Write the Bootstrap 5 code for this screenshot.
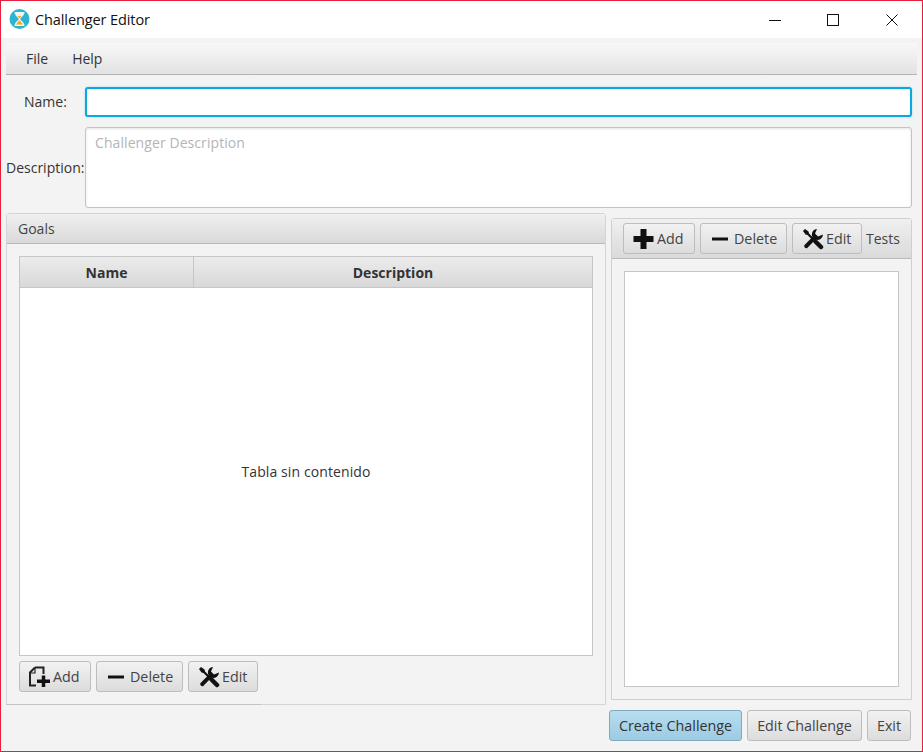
<!DOCTYPE html>
<html lang="en">
<head>
<meta charset="utf-8">
<title>Challenger Editor</title>
<link rel="stylesheet" href="https://cdn.jsdelivr.net/npm/bootstrap@5.3.0/dist/css/bootstrap.min.css">
<style>
html,body{height:100%;margin:0;}
body{font-family:"Open Sans","Noto Sans","Liberation Sans",sans-serif;font-size:14px;color:#333;background:#f3f3f3;}
.appwin{height:752px;border:1px solid #e81f3c;background:#f3f3f3;}
.titlebar{height:37px;background:#fff;color:#111;flex:none;}
.apptitle{font-size:14.5px;margin-left:5px;letter-spacing:-.1px;}
.logo{margin-left:8px;}
.winctl{width:59px;height:37px;}
.winfirst{width:57px;}
.winctls{margin-right:1px;}
.bodyarea{padding:5px 5px 10px;min-height:0;}
.menustrip{height:32px;background:linear-gradient(#f8f8f8,#e2e2e2);border-bottom:1px solid #b4b4b4;padding-left:8px;flex:none;}
.menuitem{padding:0 12px;color:#333;}
.formrow{margin-right:5px;flex:none;}
.namerow{height:30px;margin-top:12px;}
.descrow{height:81px;margin-top:10px;}
.lbl{width:79px;flex:none;white-space:nowrap;color:#333;}
.namelbl{padding-left:18px;padding-bottom:2px;}
.namefield{height:30px;border:2px solid #0aa8e0;border-radius:3px;background:#fff;box-shadow:0 0 2px #8fd8f2;}
.descfield{height:81px;border:1px solid #c4c4c4;border-radius:3px;background:#fff;padding:4px 9px;color:#b5b5b5;letter-spacing:.08px;box-shadow:inset 0 1px 3px #e4e4e4;}
.workarea{height:492px;margin-top:5px;margin-right:5px;flex:none;}
.goalspane{width:600px;height:492px;flex:none;border:1px solid #d4d4d4;border-bottom:1px solid #d4d4d4;border-radius:3px 3px 0 0;position:relative;}
.goalspane::after{content:"";position:absolute;left:-1px;bottom:-1px;width:255px;height:1px;background:#c4c4c4;}
.panehead{height:30px;background:linear-gradient(#f0f0f0,#d9d9d9);border-bottom:1px solid #b9b9b9;padding-left:11px;flex:none;color:#444;}
.panebody{padding:12px 12px 12px;}
.gridbox{height:400px;border:1px solid #c6c6c6;background:#fff;}
.gridhead{height:31px;background:linear-gradient(#ececec,#d8d8d8);border-bottom:1px solid #c6c6c6;font-weight:700;flex:none;color:#333;}
.colname{width:174px;border-right:1px solid #c6c6c6;}
.emptymsg{color:#333;letter-spacing:.1px;}
.toolset{gap:5px;margin-top:5px;}
.jfxbtn{height:31px;padding:0 9px;border:1px solid #bdbdbd;border-radius:3px;background:linear-gradient(#f2f2f2,#dcdcdc);color:#444;font-size:14.3px;gap:2px;white-space:nowrap;}
.jfxbtn svg{flex:none;}
.testspane{width:301px;height:482px;margin-top:5px;margin-left:5px;border:1px solid #cfcfcf;border-radius:3px 3px 0 0;}
.testhead{height:40px;background:linear-gradient(#f0f0f0,#dadada);border-bottom:1px solid #b9b9b9;padding-left:11px;gap:5px;flex:none;}
.testslabel{color:#444;margin-left:-1px;}
.testsbody{padding:12px 12px 12px;}
.testlist{border:1px solid #c6c6c6;background:#fff;height:416px;}
.footerbar{margin-top:5px;margin-right:6px;gap:5px;flex:none;}
.primarybtn{background:linear-gradient(#b7deef,#9ccbe2);border-color:#7fa9bd;color:#333;}
.wide1{width:72px;}
.wide2{width:87px;}
.wide3{width:70px;}
.createw{width:133px;}
.editw{width:115px;}
.exitw{width:44px;}
</style>
</head>
<body>
<div class="appwin d-flex flex-column">
  <div class="titlebar d-flex align-items-center">
    <svg class="logo" width="21" height="21" viewBox="0 0 21 21"><circle cx="10.500" cy="10" r="10" fill="#2bb4d6"/><path d="M5.500 3h10v1.500H15c0 2.500-3.200 3.700-3.700 5.500.5 1.800 3.700 3 3.700 5.500h.5V17h-10v-1.500H6c0-2.500 3.200-3.700 3.700-5.500C9.200 8.200 6 7 6 4.500h-.5z" fill="#f4f4f0"/><path d="M7 15.500l3.500-4.500 3.500 4.500z" fill="#f6a81c"/><path d="M8.500 7h4l-2 2.200z" fill="#f6a81c"/></svg>
    <span class="apptitle">Challenger Editor</span>
    <div class="ms-auto d-flex winctls">
      <div class="winctl winfirst d-flex align-items-center justify-content-center"><svg width="12" height="12" viewBox="0 0 12 12"><path d="M0 6.500h12" stroke="#111"/></svg></div>
      <div class="winctl d-flex align-items-center justify-content-center"><svg width="12" height="12" viewBox="0 0 12 12"><rect x=".5" y=".5" width="11" height="11" fill="none" stroke="#111"/></svg></div>
      <div class="winctl d-flex align-items-center justify-content-center"><svg width="12" height="12" viewBox="0 0 12 12"><path d="M.5.500l11 11M11.500.500l-11 11" stroke="#111"/></svg></div>
    </div>
  </div>
  <div class="bodyarea flex-grow-1 d-flex flex-column">
    <div class="menustrip d-flex align-items-center">
      <span class="menuitem">File</span><span class="menuitem">Help</span>
    </div>
    <div class="formrow namerow d-flex align-items-center">
      <div class="lbl namelbl">Name:</div>
      <div class="namefield flex-grow-1"></div>
    </div>
    <div class="formrow descrow d-flex align-items-center">
      <div class="lbl">Description:</div>
      <div class="descfield flex-grow-1">Challenger Description</div>
    </div>
    <div class="workarea d-flex">
      <div class="goalspane d-flex flex-column">
        <div class="panehead d-flex align-items-center">Goals</div>
        <div class="panebody">
          <div class="gridbox d-flex flex-column">
            <div class="gridhead d-flex">
              <div class="colname d-flex align-items-center justify-content-center">Name</div>
              <div class="flex-grow-1 d-flex align-items-center justify-content-center">Description</div>
            </div>
            <div class="flex-grow-1 d-flex align-items-center justify-content-center emptymsg">Tabla sin contenido</div>
          </div>
          <div class="toolset d-flex">
            <button class="jfxbtn wide1 d-flex align-items-center" type="button">
              <svg width="22" height="22" viewBox="0 0 22 22"><path d="M6 1.500h8.500V8M6 1.500L1 6.500V19.500H7" fill="none" stroke="#222" stroke-width="2"/><path d="M6 2v5H1.500" fill="none" stroke="#222" stroke-width="1.200"/><path d="M14.500 9.500v11.500M8 15.250h13" stroke="#111" stroke-width="3.500"/></svg>Add
            </button>
            <button class="jfxbtn wide2 d-flex align-items-center" type="button">
              <svg width="22" height="22" viewBox="0 0 22 22"><path d="M2 11h16" stroke="#111" stroke-width="3"/></svg>Delete
            </button>
            <button class="jfxbtn wide3 d-flex align-items-center" type="button">
              <svg width="22" height="22" viewBox="0 0 22 22"><path d="M4 4l9 9" stroke="#111" stroke-width="2.200"/><path d="M1 3L3 1 6.500 3.500 7 6 6 7 3.500 6.500z" fill="#111"/><path d="M13.500 13.500l5.500 5.500" stroke="#111" stroke-width="4.500" stroke-linecap="round"/><path d="M2.300 17.300L10.500 9A5.500 5.500 0 0 1 15 1L13 5.500 16 8.500 21 6.500A5.500 5.500 0 0 1 13.500 11.500L5 20.200A2.300 2.300 0 0 1 2.300 17.300z" fill="#111"/></svg>Edit
            </button>
          </div>
        </div>
      </div>
      <div class="testspane d-flex flex-column">
        <div class="testhead d-flex align-items-center">
          <button class="jfxbtn wide1 d-flex align-items-center" type="button">
            <svg width="22" height="22" viewBox="0 0 22 22"><path d="M10.500 1v20M.5 11h20" stroke="#111" stroke-width="6"/></svg>Add
          </button>
          <button class="jfxbtn wide2 d-flex align-items-center" type="button">
            <svg width="22" height="22" viewBox="0 0 22 22"><path d="M2 11h16" stroke="#111" stroke-width="3"/></svg>Delete
          </button>
          <button class="jfxbtn wide3 d-flex align-items-center" type="button">
            <svg width="22" height="22" viewBox="0 0 22 22"><path d="M4 4l9 9" stroke="#111" stroke-width="2.200"/><path d="M1 3L3 1 6.500 3.500 7 6 6 7 3.500 6.500z" fill="#111"/><path d="M13.500 13.500l5.500 5.500" stroke="#111" stroke-width="4.500" stroke-linecap="round"/><path d="M2.300 17.300L10.500 9A5.500 5.500 0 0 1 15 1L13 5.500 16 8.500 21 6.500A5.500 5.500 0 0 1 13.500 11.500L5 20.200A2.300 2.300 0 0 1 2.300 17.300z" fill="#111"/></svg>Edit
          </button>
          <span class="testslabel">Tests</span>
        </div>
        <div class="testsbody"><div class="testlist"></div></div>
      </div>
    </div>
    <div class="footerbar d-flex justify-content-end">
      <button class="jfxbtn primarybtn createw d-flex align-items-center justify-content-center" type="button">Create Challenge</button>
      <button class="jfxbtn editw d-flex align-items-center justify-content-center" type="button">Edit Challenge</button>
      <button class="jfxbtn exitw d-flex align-items-center justify-content-center" type="button">Exit</button>
    </div>
  </div>
</div>
</body>
</html>
